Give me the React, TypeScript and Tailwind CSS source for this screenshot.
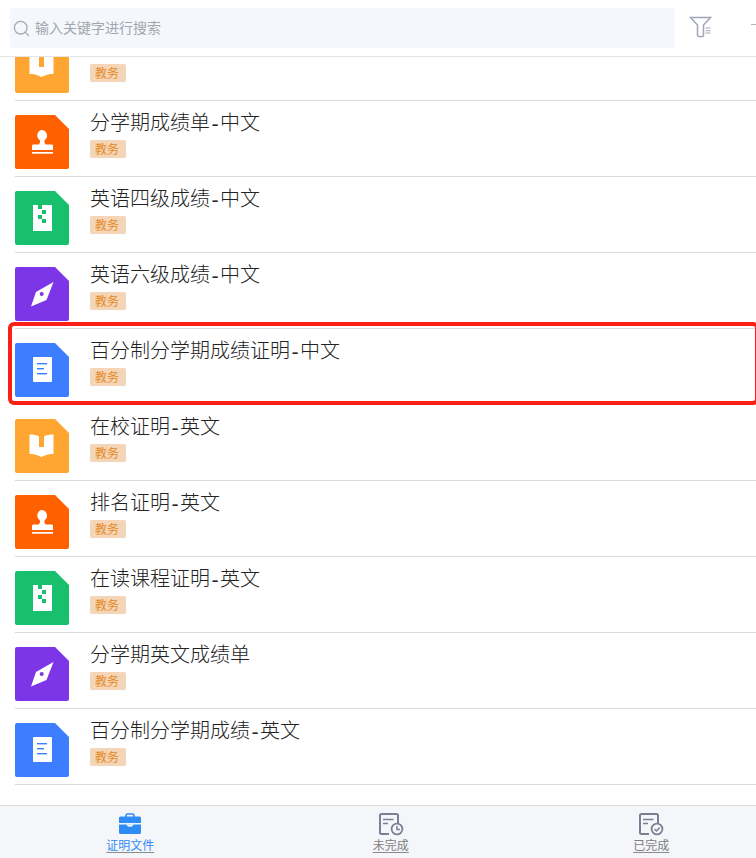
import { Search } from "lucide-react";

const CJK = "font-['Liberation_Serif','Noto_Sans_CJK_SC',serif]";
const SANS = "font-['Liberation_Sans','Noto_Sans_CJK_SC',sans-serif]";

type Kind = "book" | "stamp" | "zip" | "compass" | "doc";

const COLORS: Record<Kind, string> = {
  book: "#ffa632",
  stamp: "#ff6000",
  zip: "#18bf6c",
  compass: "#7c36e8",
  doc: "#3c7eff",
};

// first row is scrolled under the search bar, its title can't be seen
const ROWS: { title: string; kind: Kind }[] = [
  { title: "", kind: "book" },
  { title: "分学期成绩单-中文", kind: "stamp" },
  { title: "英语四级成绩-中文", kind: "zip" },
  { title: "英语六级成绩-中文", kind: "compass" },
  { title: "百分制分学期成绩证明-中文", kind: "doc" },
  { title: "在校证明-英文", kind: "book" },
  { title: "排名证明-英文", kind: "stamp" },
  { title: "在读课程证明-英文", kind: "zip" },
  { title: "分学期英文成绩单", kind: "compass" },
  { title: "百分制分学期成绩-英文", kind: "doc" },
];

/* ── File tile with folded corner ── */
function FileIcon({ kind }: { kind: Kind }) {
  const c = COLORS[kind];
  return (
    <svg width="54" height="54" viewBox="0 0 54 54" className="shrink-0">
      <path d="M2 0H40L54 14V52a2 2 0 0 1-2 2H2a2 2 0 0 1-2-2V2a2 2 0 0 1 2-2Z" fill={c} />
      {kind === "book" && (
        <path d="M14.500 15.500C18 15.500 22 16 24 17.500V28H29V17.500C31 16 35 15.500 38.500 15.500V35C35 35 31 35.500 26.500 38C22 35.500 18 35 14.500 35Z" fill="#fff" />
      )}
      {kind === "stamp" && (
        <>
          <path d="M26.500 15a5.600 5.600 0 0 1 3.600 9.800c-.9.900-.9 2.200-.3 3.200l.8 1.500H37a1.200 1.200 0 0 1 1 1.200V35H17v-4.300a1.200 1.200 0 0 1 1-1.200h5.900l.8-1.500c.6-1 .6-2.300-.3-3.200A5.600 5.600 0 0 1 26.500 15Z" fill="#fff" />
          <rect x="17" y="37" width="21" height="1.700" fill="#fff" />
        </>
      )}
      {kind === "zip" && (
        <>
          <rect x="18" y="14" width="19" height="26" fill="#fff" />
          <rect x="23" y="14" width="4" height="4" fill={c} />
          <rect x="27" y="19" width="4" height="4" fill={c} />
          <rect x="23" y="24" width="4" height="4" fill={c} />
          <rect x="27" y="28" width="4" height="4" fill={c} />
        </>
      )}
      {kind === "compass" && (
        <>
          <path d="M38.500 15L31.500 33L16 39.500L21 25Z" fill="#fff" />
          <circle cx="26.700" cy="27" r="2" fill={c} />
        </>
      )}
      {kind === "doc" && (
        <>
          <rect x="18" y="14" width="19" height="25" rx="1" fill="#fff" />
          <rect x="22" y="20" width="10" height="1.400" fill={c} />
          <rect x="22" y="25" width="7" height="1.400" fill={c} />
          <rect x="22" y="30" width="10" height="1.400" fill={c} />
        </>
      )}
    </svg>
  );
}

function Row({ title, kind }: { title: string; kind: Kind }) {
  const [before, after] = title.split("-");
  return (
    <div className="ml-[15px] flex h-[76px] gap-[21px] border-b border-[#dcdcdc] pt-[14px]">
      <FileIcon kind={kind} />
      <div className="min-w-0">
        <div className={`${CJK} h-[25px] whitespace-nowrap text-[20px] font-light leading-[16px] text-[#222]`}>
          {before}
          {after && (
            <>
              <span className="inline-block w-[10px] text-center">-</span>
              {after}
            </>
          )}
        </div>
        <span className={`${SANS} block h-[18px] w-[36px] rounded-[2px] bg-[#f4d5b8] pl-[5px] text-[12px] leading-[20px] text-[#e58a24]`}>
          教务
        </span>
      </div>
    </div>
  );
}

/* ── Bottom tab icons ── */
function ReportIcon({ done }: { done?: boolean }) {
  return (
    <svg width="26" height="24" viewBox="0 0 26 24" fill="none" stroke="#7b7f93" strokeWidth="2">
      <path d="M11 22H3.500A1.500 1.500 0 0 1 2 20.500V3.500A1.500 1.500 0 0 1 3.500 2H18.500A1.500 1.500 0 0 1 20 3.500V11" />
      <path d="M5 7.500H15.500M5 11.500H10" strokeWidth="1.700" />
      <circle cx="19" cy="17" r="5.400" fill="#f5f6fa" strokeWidth="1.800" />
      {done ? (
        <path d="M16.500 17L18.500 19L21.700 15.500" strokeWidth="1.500" />
      ) : (
        <path d="M19 14V17.500H22" strokeWidth="1.500" />
      )}
    </svg>
  );
}

function BriefcaseIcon() {
  return (
    <svg width="24" height="24" viewBox="0 0 24 24">
      <path d="M8 5V3.500A1.500 1.500 0 0 1 9.500 2H14.500A1.500 1.500 0 0 1 16 3.500V5" fill="none" stroke="#2f8cf4" strokeWidth="1.600" />
      <path d="M2.500 4.500H21.500A1.500 1.500 0 0 1 23 6V11H1V6A1.500 1.500 0 0 1 2.500 4.500Z" fill="#2f8cf4" />
      <path d="M1 12.500H8.500C9 14 10.300 14.800 12 14.800S15 14 15.500 12.500H23V20.500A1.500 1.500 0 0 1 21.500 22H2.500A1.500 1.500 0 0 1 1 20.500Z" fill="#2f8cf4" />
      <path d="M9 10.800C9.500 12.400 10.500 13.200 12 13.200S14.500 12.400 15 10.800" fill="none" stroke="#cfe3fb" strokeWidth="1.200" />
    </svg>
  );
}

function Tab({ label, active, children }: { label: string; active?: boolean; children: React.ReactNode }) {
  return (
    <div className="flex w-[260.5px] shrink-0 flex-col items-center pt-[6px]">
      {children}
      <span
        className={`${SANS} mt-[2px] text-[12px] leading-[16px] underline underline-offset-2 decoration-[#8a8a8a] ${
          active ? "text-[#2f8cf4]" : "text-[#7d7d7d]"
        }`}
      >
        {label}
      </span>
    </div>
  );
}

export default function App() {
  return (
    <div className="relative flex h-[858px] w-[756px] flex-col overflow-hidden bg-white">
      {/* Search bar */}
      <div className="z-10 flex h-[57px] shrink-0 items-start border-b border-[#e4e4e4] bg-white pl-[10px] pt-[8px]">
        <div className="flex h-[40px] w-[665px] items-center gap-[4px] bg-[#f4f7fc] pl-[2px]">
          <Search size={19} strokeWidth={1.7} className="text-[#a8abb3]" />
          <span className={`${SANS} text-[14px] text-[#a3a6ad]`}>输入关键字进行搜索</span>
        </div>
        <svg width="24" height="24" viewBox="0 0 24 24" fill="none" stroke="#a0a5b9" strokeWidth="1.500" className="ml-[14px] mt-[8px] shrink-0">
          <path d="M1.500 1.500H21.500L14.500 9V19.500C14.500 21 9 21 8.500 19.500V9Z" />
          <path d="M16.500 12H21.500M16.500 14.700H21.500M16.500 17H21.500" strokeWidth="1.100" />
        </svg>
        <div className="ml-auto mt-[16px] h-px w-[5px] bg-[#b5b5b5]" />
      </div>

      {/* List */}
      <div className="min-h-0 flex-1 overflow-hidden">
        <div className="-mt-[32px]">
          {ROWS.map((r, i) => (
            <Row key={i} title={r.title} kind={r.kind} />
          ))}
        </div>
      </div>

      {/* Tabs */}
      <div className="flex h-[53px] shrink-0 border-t border-[#dedede] bg-[#f5f6fa]">
        <Tab label="证明文件" active>
          <BriefcaseIcon />
        </Tab>
        <Tab label="未完成">
          <ReportIcon />
        </Tab>
        <Tab label="已完成">
          <ReportIcon done />
        </Tab>
      </div>

      {/* Red annotation */}
      <div className="absolute left-[8px] top-[322px] h-[83px] w-[751px] rounded-[6px] border-[4px] border-[#fb1f16]" />
    </div>
  );
}
